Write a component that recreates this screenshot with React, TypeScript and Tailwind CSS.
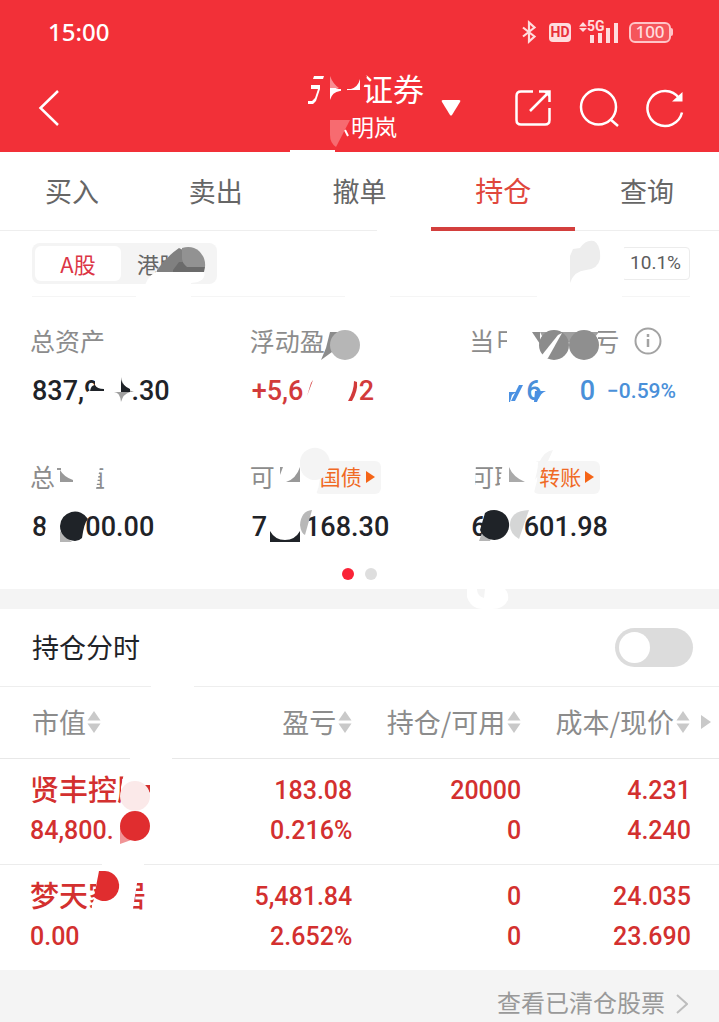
import React, { useState } from 'react';

const tabs = ['买入', '卖出', '撤单', '持仓', '查询'];

const holdings = [
  { name: '贤丰控股', value: '84,800.', profit: '183.08', rate: '0.216%', held: '20000', usable: '0', cost: '4.231', price: '4.240' },
  { name: '梦天家居', value: '0.00', profit: '5,481.84', rate: '2.652%', held: '0', usable: '0', cost: '24.035', price: '23.690' },
];

// Censoring marks laid over a block, viewBox is in page units
const Smudge = ({ box, className = '', children }: { box: string; className?: string; children: React.ReactNode }) => (
  <svg viewBox={box} className={`pointer-events-none absolute overflow-visible ${className}`} aria-hidden="true">
    {children}
  </svg>
);

const SortIcon = () => (
  <svg viewBox="0 0 14 22" className="h-[22px] w-3.5 shrink-0" fill="#c9c9c9" aria-hidden="true">
    <path d="M7 0 13.5 9.500H.5z" />
    <path d="M7 22 13.5 12.500H.5z" />
  </svg>
);

const StatusIcons = () => (
  <div className="flex items-center text-[#ffdcdd]">
    <svg viewBox="0 0 16 24" className="mr-3 h-6 w-4" fill="none" stroke="currentColor" strokeWidth="2.200">
      <path d="M2 7.500 13.500 16.500 8 21.500V2.500L13.500 7.500 2 16.500" />
    </svg>
    <span className="mr-2 flex h-[19px] w-[22px] items-center justify-center rounded bg-[#ffdcdd] font-['Roboto'] text-sm font-bold text-[#e8303a]">
      HD
    </span>
    <svg viewBox="0 -4 40 32" className="mr-2.5 h-8 w-10 overflow-visible" fill="currentColor">
      <path d="M4 2 8 6.500H0zM4 12 0 8H8z" />
      <path d="M11 15h4v8h-4zM19 13h4v10h-4zM27 8h4v15h-4zM35 3h4v20h-4z" />
      <text x="8" y="11" fontSize="14" fontWeight="700" fontFamily="Roboto">5G</text>
    </svg>
    <div className="flex h-[21px] w-[42px] items-center justify-center rounded-md border-2 border-[#ffc4c7] bg-[#f5555b] font-['Noto_Sans'] text-[17px] font-medium">
      100
    </div>
    <div className="h-2 w-0.5 rounded-r bg-[#ffc4c7]" />
  </div>
);

const Header = () => (
  <header className="bg-[#f23038] text-white">
    <div className="flex h-16 items-center justify-between pr-[46px] pl-12">
      <span className="font-['Noto_Sans'] text-2xl font-medium">15:00</span>
      <StatusIcons />
    </div>
    <div className="flex h-22 items-center">
      <div className="flex-1 pr-4 pl-9">
        <button type="button" aria-label="返回" className="block">
          <svg viewBox="0 0 24 36" className="h-9 w-6" fill="none" stroke="currentColor" strokeWidth="2.500">
            <path d="M22 1 4.500 18 22 35" />
          </svg>
        </button>
      </div>
      <div className="relative flex h-full flex-col pt-1.5 pl-[5px]">
        <h1 className="flex h-9 items-center text-[31px]">
          <span className="w-[62px]" />
          <span>证券</span>
        </h1>
        <p className="flex h-10 items-center justify-center text-[23px]">
          <span className="w-6" />
          明岚
        </p>
        <Smudge box="295 64 60 88" className="top-0 left-0 h-22 w-[60px]">
          <path d="M314 76h10l-1 3h-10zM311 85h9v4l-4 12-3 3h-5v-3h4l3-3 3-9h-7z" fill="#fff" />
          <path d="M330 82q3 6 9 7h12q7-2 9-10v11h-12l-8 1q-8 1-10 9z" fill="#fff" />
          <path d="M341 88l6-1v6h-6z" fill="#f23038" />
          <path d="M330 76q3 8 9 12h-9z" fill="#f98d91" />
          <path d="M360 76h7q-2 9-6 17z" fill="#f23038" />
          <path d="M330 120h20l-14 27q-6-4-6-12z" fill="#f76b70" />
          <path d="M345 130l3 6" stroke="#fff" strokeWidth="2" />
          <path d="M290 150h45v2h-45z" fill="#fff" />
        </Smudge>
      </div>
      <div className="flex flex-1 items-center justify-between pr-[35px] pl-[17px]">
        <button type="button" aria-label="切换账户">
          <svg viewBox="0 0 20 18" className="h-[18px] w-5" fill="currentColor">
            <path d="M2 1h16q2 0 1 2l-8 13q-1 1-2 0L1 3Q0 1 2 1z" />
          </svg>
        </button>
        <div className="flex items-center gap-[27px]">
          <button type="button" aria-label="分享">
            <svg viewBox="0 0 38 38" className="size-[38px]" fill="none" stroke="currentColor" strokeWidth="2.500">
              <path d="M19 2.500H7Q2.500 2.500 2.500 7v24q0 4.500 4.500 4.500h24q4.500 0 4.500-4.500V19M16 22 35 3M25 2.500h10.500V13" />
              <path d="M29 2h7v7z" fill="currentColor" stroke="none" />
            </svg>
          </button>
          <button type="button" aria-label="搜索">
            <svg viewBox="0 0 40 40" className="size-10" fill="none" stroke="currentColor" strokeWidth="2.500">
              <circle cx="19.500" cy="19" r="17.500" />
              <path d="M31 31l8 7" />
            </svg>
          </button>
          <button type="button" aria-label="刷新">
            <svg viewBox="0 0 38 40" className="h-10 w-[38px]" fill="none" stroke="currentColor" strokeWidth="2.500">
              <path d="M36 24.500A17.500 17.500 0 1 1 33 10" />
              <path d="M36.500 4v9.500H26z" fill="currentColor" stroke="none" />
            </svg>
          </button>
        </div>
      </div>
    </div>
  </header>
);

const Tabs = ({ active, onSelect }: { active: string; onSelect: (tab: string) => void }) => (
  <nav className="relative grid h-[79px] grid-cols-5 border-b border-[#eeeeee]">
    {tabs.map((tab) => (
      <button
        key={tab}
        type="button"
        onClick={() => onSelect(tab)}
        className={
          tab === active
            ? '-mb-px border-b-4 border-[#d33f3d] text-[28px] text-[#e0473c]'
            : 'text-[27px] text-[#666666]'
        }
      >
        {tab}
      </button>
    ))}
    <span className="absolute -bottom-px left-[52.500%] h-px w-[7.500%] bg-white" />
  </nav>
);

const MarketFilter = () => (
  <div className="relative mr-[29px] ml-8 flex h-[66px] items-center justify-between border-b border-[#f5f5f5]">
    <div className="relative flex h-[41px] w-[185px] rounded-lg bg-[#f4f4f4] p-[3px] text-[22px]">
      <button type="button" className="w-[86px] rounded-md bg-white text-[#dc3545]">A股</button>
      <button type="button" className="pl-4 text-[#666666]">港股</button>
      <Smudge box="32 243 185 54" className="top-0 left-0 h-[54px] w-[185px]">
        <path d="M162 266q8-11 17-18v14l28 8v14h-45z" fill="#f4f4f4" />
        <path d="M145 285q5-13 15-14h44q3 11-13 12v14h-55z" fill="#fff" />
        <path d="M157 270q9-13 22-22l4 2v22h-26z" fill="#808080" />
        <path d="M173 270l6-8h4l22 5-1 5h-31z" fill="#6b6b6b" />
        <path d="M182 248q10-3 17 3 7 7 6 16h-18q-5-4-5-9z" fill="#929292" />
        <path d="M136 295h47v3h-47z" fill="#fff" />
      </Smudge>
    </div>
    <div className="relative flex h-[33px] items-center rounded border border-[#ececec] px-2 font-['Roboto'] text-[19px] text-[#5c5c5c]">
      10.1%
      <Smudge box="566 247 124 50" className="-top-px -right-px h-[50px] w-[124px]">
        <path d="M570 283v-27l3-7 7-1q6-9 14-7 7 4 6 18-2 10-14 11-12 1-16 13z" fill="#ededed" />
        <path d="M537 295h85v3h-85zM619 246h5v36h-5zM345 295h45v3h-45z" fill="#fff" />
      </Smudge>
    </div>
  </div>
);

type AssetProps = {
  label: string;
  box: string;
  action?: string;
  info?: boolean;
  valueClass?: string;
  marks: React.ReactNode;
  children: React.ReactNode;
};

const Asset = ({ label, box, action, info, valueClass = 'text-[#1f2328]', marks, children }: AssetProps) => (
  <div className="relative">
    <div className="flex h-9 items-center whitespace-nowrap text-[25px] text-[#8c8c8c]">
      {label}
      {action && (
        <button type="button" className="ml-3.5 flex h-[33px] items-center gap-1 rounded-md bg-[#f5f5f5] px-1.5 text-[21px] text-[#f06a25]">
          {action}
          <svg viewBox="0 0 9 12" className="h-3 w-[9px]" fill="#f56416">
            <path d="M0 0 9 6 0 12z" />
          </svg>
        </button>
      )}
      {info && (
        <svg viewBox="0 0 28 28" className="ml-[15px] size-7" fill="none" stroke="#a3a3a3" strokeWidth="2">
          <circle cx="14" cy="14" r="12.500" />
          <path d="M14 12v8M14 7v3" strokeWidth="2.500" />
        </svg>
      )}
    </div>
    <div className={`mt-[11px] flex h-10 items-center pt-0.5 pl-0.5 font-['Roboto'] text-[27px] font-medium ${valueClass}`}>{children}</div>
    <Smudge box={box} className="top-0 left-0 h-[87px] w-[220px]">
      {marks}
    </Smudge>
  </div>
);

const Assets = () => (
  <section className="relative grid grid-cols-3 gap-y-[49px] px-[30px] pt-[26px] pb-[43px]">
    <Asset
      label="总资产"
      box="30 323 220 87"
      marks={
        <>
          <path d="M95 378h14v26H87v-12l8-5z" fill="#fff" />
          <path d="M90 391q1-6 5-6 2 4 9 4v2z" fill="#1f2328" />
          <path d="M121 377v15h-7q6 0 7 10 2-8 9-10h4q-11-3-13-15z" fill="#a0a0a0" />
          <path d="M121 380q2 6 9 9v3h-9z" fill="#1f2328" />
        </>
      }
    >
      <span>837,9</span>
      <span className="w-8" />
      <span>.30</span>
    </Asset>
    <Asset
      label="浮动盈亏"
      box="250 323 220 87"
      valueClass="text-[#d23b3b]"
      marks={
        <>
          <path d="M325 326h36v34h-36z" fill="#fff" />
          <path d="M330 332h11l-9 20-11 8 5-12z" fill="#8c8c8c" />
          <circle cx="345" cy="345" r="15" fill="#b6b6b6" />
          <path d="M313 380l-6 16 4-13z" fill="#d23b3b" />
          <path d="M340 376h18v28h-18z" fill="#fff" />
          <path d="M354 381l3 1q1 9-5 19h-4q6-10 6-20z" fill="#d23b3b" />
        </>
      }
    >
      <span>+5,6</span>
      <span className="w-10" />
      <span>92</span>
    </Asset>
    <Asset
      label="当日参考盈亏"
      box="470 323 220 87"
      info
      valueClass="text-[#4a90d9]"
      marks={
        <>
          <path d="M508 326h91v35h-91zM498 348h12v12h-12z" fill="#fff" />
          <path d="M541 332h59l-8 10h-46z" fill="#a0a0a0" />
          <path d="M533 332h8v12z" fill="#8c8c8c" />
          <circle cx="555" cy="345" r="15" fill="#8c8c8c" />
          <circle cx="585" cy="345" r="15" fill="#8f8f8f" />
          <path d="M543 355l16-20 4-2-14 25-7 3z" fill="#fff" />
          <path d="M510 392h7l-4 3-2 7h-1zM520 385h4l-8 16h-4z" fill="#4a90e2" />
          <path d="M536 391h11q-6 2-9 11h-3z" fill="#4a90e2" />
          <path d="M541 396h5v8h-7z" fill="#fff" />
        </>
      }
    >
      <span className="w-[55px]" />
      <span>6</span>
      <span className="w-[38px]" />
      <span>0</span>
      <span className="ml-3 pt-0.5 text-[21px]">−0.59%</span>
    </Asset>
    <Asset
      label="总市值"
      box="30 459 220 87"
      marks={
        <>
          <path d="M55 461h46l-6 34H55z" fill="#fff" />
          <path d="M57 468h4v2h-4zM60 470q4 7 13 10v2H60z" fill="#999" />
        </>
      }
    >
      <span>8</span>
      <span className="w-[38px]" />
      <span>00.00</span>
      <Smudge box="30 505 130 40" className="top-[47px] left-0 h-10 w-[130px]">
        <path d="M43 540l4-19v20z" fill="#fff" />
        <path d="M60 530l12 11H60z" fill="#b5b5b5" />
        <path d="M60 525a15 15 0 0 1 28-7q-4 4-6 19-3 3-7 3a15 15 0 0 1-15-15z" fill="#1f2328" />
      </Smudge>
    </Asset>
    <Asset
      label="可用"
      action="国债"
      box="250 459 220 87"
      marks={
        <>
          <path d="M275 460h45q2 20-4 35h-41z" fill="#fff" />
          <path d="M280 467h3l-3 8zM300 467v15h-14q10-3 14-15z" fill="#999" />
          <path d="M300 465a15 15 0 1 1 28 5q-2 9-12 10a15 15 0 0 1-16-15z" fill="#f4f4f4" />
          <path d="M270 531v11h30v-11q-5 9-15 9t-15-9z" fill="#1f2328" />
          <path d="M300 525q1-14 12-15l-7 25q-4-2-5-10z" fill="#b8b8b8" />
        </>
      }
    >
      <span>7</span>
      <span className="w-[38px]" />
      <span>168.30</span>
    </Asset>
    <Asset
      label="可取"
      action="转账"
      box="470 459 220 87"
      marks={
        <>
          <path d="M469 463h8l-1 24h-7zM504 462h35l-1 19-4 15h-34l1-14z" fill="#fff" />
          <path d="M510 467q4 10 16 15h-16z" fill="#aaa" />
          <path d="M540 463q5-12 14-13l-5 11-7 10-6 9z" fill="#f4f4f4" />
          <path d="M484 530h12l-5 11h-11z" fill="#b5b5b5" />
          <path d="M486 513A15 15 0 1 1 481 530z" fill="#1f2328" />
          <path d="M511 525q0-14 19-15l-10 29q-9-5-9-14z" fill="#d5d6d6" />
        </>
      }
    >
      <span>6</span>
      <span className="w-[37px]" />
      <span>601.98</span>
    </Asset>
    <div className="absolute inset-x-0 bottom-[9px] flex justify-center gap-[11px]">
      <span className="size-3 rounded-full bg-[#fa2337]" />
      <span className="size-3 rounded-full bg-[#dedede]" />
    </div>
  </section>
);

const HoldingsTable = () => (
  <table className="w-full table-fixed">
    <thead>
      <tr className="h-[71px] border-b border-[#e8e8e8] text-[27px] whitespace-nowrap text-[#8c8c8c]">
        <th className="w-[28%] pl-8 font-normal">
          <div className="relative flex items-center gap-px">
            市值
            <SortIcon />
            <Smudge box="32 757 170 1" className="top-[55px] left-0 h-px w-[170px]">
              <path d="M130 756h42v3h-42z" fill="#fff" />
            </Smudge>
          </div>
        </th>
        <th className="w-[21%] font-normal">
          <div className="flex items-center justify-end gap-0.5">盈亏<SortIcon /></div>
        </th>
        <th className="w-[23.500%] font-normal">
          <div className="flex items-center justify-end gap-0.5">持仓/可用<SortIcon /></div>
        </th>
        <th className="relative pr-[29px] font-normal">
          <div className="flex items-center justify-end gap-0.5">成本/现价<SortIcon /></div>
          <svg viewBox="0 0 10 14" className="absolute top-7 right-2 h-3.5 w-2.5" fill="#c9c9c9">
            <path d="M0 0 10 7 0 14z" />
          </svg>
        </th>
      </tr>
    </thead>
    <tbody>
      {holdings.map((item, i) => (
        <tr key={item.name} className="border-b border-[#ececec] text-right font-['Roboto'] text-[25px]/[40px] font-medium text-[#d3302f] last:border-0">
          <td className="pt-3 pb-[13px] pl-[30px] text-left">
            <div className="relative">
              <div className="h-10 font-['Noto_Sans_CJK_SC',sans-serif] text-[29px]/[34px]">{item.name}</div>
              <div className="h-10">{item.value}</div>
              {i === 0 ? (
                <Smudge box="30 770 130 80" className="top-0 left-0 h-20 w-[130px]">
                  <path d="M124 772h24v34h-27v-20z" fill="#fff" />
                  <path d="M143 784h7v8z" fill="#d3302f" />
                  <circle cx="135" cy="795" r="15" fill="#fbe9e9" />
                  <path d="M120 826v17l14-5z" fill="#f09496" />
                  <circle cx="135" cy="825" r="15" fill="#e02d2f" />
                </Smudge>
              ) : (
                <Smudge box="30 876 130 80" className="top-0 left-0 h-20 w-[130px]">
                  <path d="M96 876h42l-6 38H91l1-10 4-12z" fill="#fff" />
                  <path d="M102 862h42v4h-42z" fill="#fff" />
                  <path d="M99 870h6a15 15 0 1 1-11 26z" fill="#e02d2f" />
                </Smudge>
              )}
            </div>
          </td>
          <td className="pt-3 pb-[13px]"><div>{item.profit}</div><div>{item.rate}</div></td>
          <td className="pt-3 pb-[13px]"><div>{item.held}</div><div>{item.usable}</div></td>
          <td className="pt-3 pr-7 pb-[13px]"><div>{item.cost}</div><div>{item.price}</div></td>
        </tr>
      ))}
    </tbody>
  </table>
);

const App: React.FC = () => {
  const [tab, setTab] = useState<string>('持仓');
  const [intraday, setIntraday] = useState<boolean>(false);

  return (
    <div className="min-h-screen bg-[#f4f4f4] font-['Noto_Sans_CJK_SC',sans-serif]">
      <Header />
      <main className="bg-white">
        <Tabs active={tab} onSelect={setTab} />
        <MarketFilter />
        <Assets />

        <div className="relative h-5 bg-[#f4f4f4]">
          <svg viewBox="0 0 42 20" className="absolute top-0 left-[65%] h-5 w-[42px]" fill="#fff" aria-hidden="true">
            <path d="M0 0h10q0 7 7 9l1-9h20q4 4 3 11-4 9-16 9H16Q4 20 0 8z" />
          </svg>
        </div>

        <div className="relative flex h-[78px] items-center justify-between border-b border-[#eeeeee] pr-[26px] pl-8">
          <label htmlFor="intraday" className="text-[27px] text-[#1f2328]">持仓分时</label>
          <input
            id="intraday"
            type="checkbox"
            checked={intraday}
            onChange={(e) => setIntraday(e.target.checked)}
            className="h-[39px] w-[78px] appearance-none rounded-full bg-[#dcdcdc] p-1 before:block before:size-[31px] before:rounded-full before:bg-white checked:bg-[#f23038] checked:before:ml-auto"
          />
          <span className="absolute -bottom-px left-[21%] h-px w-[6%] bg-white" />
        </div>

        <HoldingsTable />
      </main>
      <footer className="flex justify-end pt-3 pr-[31px]">
        <a href="#cleared" className="flex h-10 items-center gap-[11px] text-2xl text-[#999999]">
          查看已清仓股票
          <svg viewBox="0 0 12 20" className="mt-1 h-5 w-3" fill="none" stroke="#bdbdbd" strokeWidth="2">
            <path d="M1 1l10 9-10 9" />
          </svg>
        </a>
      </footer>
    </div>
  );
};

export default App;
